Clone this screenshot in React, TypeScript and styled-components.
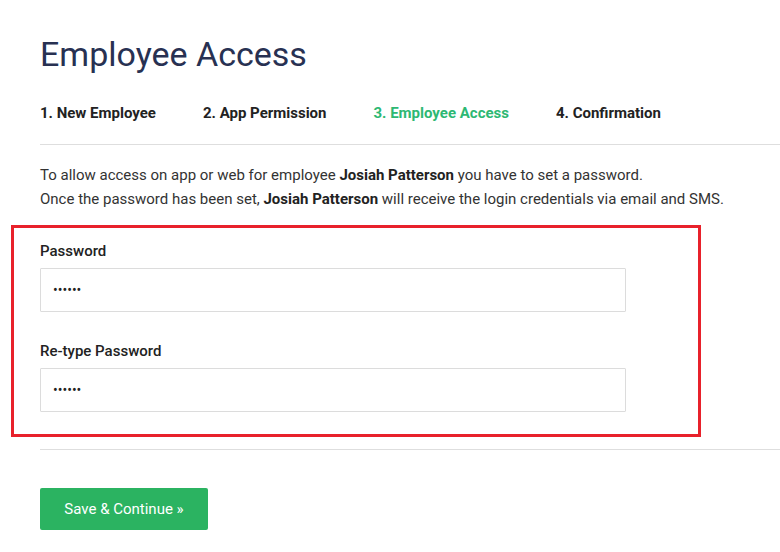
import styled, { createGlobalStyle } from "styled-components";

const GlobalStyle = createGlobalStyle`
  body {
    margin: 0;
    background: #fff;
    font-family: Roboto, "Liberation Sans", sans-serif;
    color: #333;
  }
`;

const steps = [
  { label: "1. New Employee" },
  { label: "2. App Permission" },
  { label: "3. Employee Access", active: true },
  { label: "4. Confirmation" },
];

export default function App() {
  return (
    <Page>
      <GlobalStyle />
      <Title>Employee Access</Title>
      <Steps>
        {steps.map((s) => (
          <Step key={s.label} $active={s.active}>
            {s.label}
          </Step>
        ))}
      </Steps>
      <Intro>
        To allow access on app or web for employee <b>Josiah Patterson</b> you have to set a password.
        <br />
        Once the password has been set, <b>Josiah Patterson</b> will receive the login credentials via email and SMS.
      </Intro>
      <Highlight>
        <Field>
          <Label>Password</Label>
          <Input type="password" defaultValue="123456" readOnly />
        </Field>
        <Field>
          <Label>Re-type Password</Label>
          <Input type="password" defaultValue="123456" readOnly />
        </Field>
      </Highlight>
      <Footer>
        <SaveButton type="button">Save &amp; Continue »</SaveButton>
      </Footer>
    </Page>
  );
}

const Page = styled.div`
  padding-left: 40px;
  width: 740px;
`;

const Title = styled.h1`
  margin: 0;
  padding-top: 33px;
  font-size: 34px;
  line-height: 43px;
  font-weight: 400;
  color: #283152;
`;

const Steps = styled.div`
  display: flex;
  gap: 47px;
  margin-top: 27px;
  padding-bottom: 21px;
  border-bottom: 1px solid #dedede;
`;

const Step = styled.div<{ $active?: boolean }>`
  font-size: 15px;
  line-height: 20px;
  font-weight: 700;
  color: ${({ $active }) => ($active ? "#2db873" : "#222")};
`;

const Intro = styled.p`
  margin: 18px 0 0;
  font-size: 15px;
  line-height: 24px;
  color: #333;

  b {
    font-weight: 700;
    color: #222;
  }
`;

const Highlight = styled.div`
  box-sizing: border-box;
  margin: 14px 0 0 -29px;
  width: 690px;
  border: 3px solid #e8212b;
  padding: 13px 0 22px 26px;
  display: flex;
  flex-direction: column;
  gap: 29px;
`;

const Field = styled.div`
  display: flex;
  flex-direction: column;
  gap: 7px;
`;

const Label = styled.label`
  font-size: 15px;
  line-height: 20px;
  font-weight: 500;
  color: #222;
`;

const Input = styled.input`
  box-sizing: border-box;
  width: 586px;
  height: 44px;
  border: 1px solid #dcdcdc;
  border-radius: 1px;
  padding: 0 12px;
  font-family: Roboto, "Liberation Sans", sans-serif;
  font-size: 14px;
  color: #222;
  outline: none;
`;

const Footer = styled.div`
  margin-top: 12px;
  border-top: 1px solid #dedede;
  padding-top: 38px;
`;

const SaveButton = styled.button`
  width: 168px;
  height: 42px;
  border: none;
  border-radius: 2px;
  background: #2bb361;
  color: #fff;
  font-family: Roboto, "Liberation Sans", sans-serif;
  font-size: 15px;
  cursor: pointer;
`;
